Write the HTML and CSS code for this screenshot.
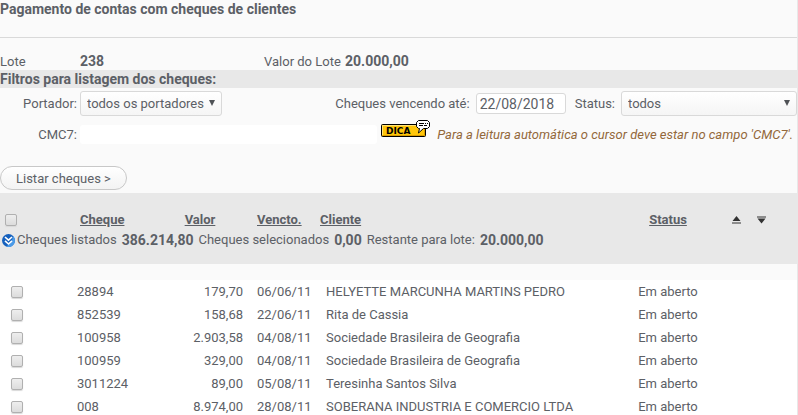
FILE: index.html
```html
<!DOCTYPE html>
<html lang="pt-br">
<head>
    <meta charset="UTF-8">
    <meta name="viewport" content="width=device-width, initial-scale=1.0">
    <title>Pagamento de contas com cheques de clientes</title>
    <link rel="stylesheet" href="styles.css">
</head>
<body>
    <div class="pagina">
        <h1 class="titulo">Pagamento de contas com cheques de clientes</h1>

        <div class="lote">
            <span class="lote-rotulo">Lote</span>
            <strong class="lote-numero">238</strong>
            <span class="lote-valor">Valor do Lote</span>
            <strong>20.000,00</strong>
        </div>

        <h2 class="subtitulo">Filtros para listagem dos cheques:</h2>

        <form class="filtros">
            <div class="linha">
                <label class="rotulo" for="portador">Portador:</label>
                <span class="selecao selecao-portador">
                    <select id="portador"><option>todos os portadores</option></select>
                </span>
                <label class="rotulo-data" for="vencendo">Cheques vencendo até:</label>
                <input class="data" type="text" id="vencendo" value="22/08/2018">
                <label class="rotulo-status" for="status">Status:</label>
                <span class="selecao selecao-status">
                    <select id="status"><option>todos</option></select>
                </span>
            </div>
            <div class="linha">
                <label class="rotulo" for="cmc7">CMC7:</label>
                <input class="cmc7" type="text" id="cmc7">
                <svg class="selo-dica" width="49" height="19" viewBox="0 0 49 19" role="img" aria-label="Dica">
                    <rect x="0.5" y="4.5" width="44" height="12" rx="1" fill="#ffc60a" stroke="#000"/>
                    <path d="M1.5 15.5V5.5H44" fill="none" stroke="#ffe27a"/>
                    <path d="M1 15.5H43.500V8" fill="none" stroke="#d99c00"/>
                    <text class="selo-texto" x="5" y="14">DICA</text>
                    <path d="M37.500 .5H46.500L48.500 2.500V6.500L46.500 8.500H42.500L37.500 13L38.500 8.500H37.500L35.500 6.500V2.500Z" fill="#fff" stroke="#000"/>
                    <path d="M38 3.500h5m1 0h1m1 0h1M38 5.500h4m1 0h3" stroke="#000" fill="none"/>
                </svg>
                <em class="dica">Para a leitura automática o cursor deve estar no campo 'CMC7'.</em>
            </div>
            <button class="botao" type="button">Listar cheques &gt;</button>
        </form>

        <table class="cheques">
            <colgroup>
                <col class="col-marca">
                <col class="col-cheque">
                <col class="col-valor">
                <col class="col-vencto">
                <col class="col-cliente">
                <col class="col-status">
                <col class="col-ordem">
            </colgroup>
            <thead>
                <tr class="cabecalho">
                    <th class="marca"><input type="checkbox" aria-label="Marcar todos"></th>
                    <th class="cheque"><a href="#">Cheque</a></th>
                    <th class="centro"><a href="#">Valor</a></th>
                    <th class="vencto"><a href="#">Vencto.</a></th>
                    <th><a href="#">Cliente</a></th>
                    <th class="centro"><a href="#">Status</a></th>
                    <th>
                        <div class="ordem">
                            <a href="#" aria-label="Subir"><svg width="9" height="8" viewBox="0 0 9 8"><path d="M4.500 0L8.500 5H.5Z M0 6.500H9V7.500H0Z" fill="#333"/></svg></a>
                            <a href="#" aria-label="Descer"><svg width="9" height="8" viewBox="0 0 9 8"><path d="M0 .5H9V1.500H0Z M.5 2.500H8.500L4.500 7.500Z" fill="#333"/></svg></a>
                        </div>
                    </th>
                </tr>
                <tr class="resumo">
                    <td colspan="7">
                        <div class="totais">
                            <svg width="13" height="13" viewBox="0 0 13 13">
                                <circle cx="6.500" cy="6.500" r="6.500" fill="#1560bd"/>
                                <path d="M13 6.500A6.500 6.500 0 0 1 4 12.500Q10 10 11 2A6.500 6.500 0 0 1 13 6.500Z" fill="#4b9be8"/>
                                <path d="M3 3L6.500 6.200L10 3M3 6.800L6.500 10L10 6.800" fill="none" stroke="#fff" stroke-width="1.600"/>
                            </svg>
                            <span>Cheques listados</span>
                            <strong>386.214,80</strong>
                            <span>Cheques selecionados</span>
                            <strong>0,00</strong>
                            <span>Restante para lote:</span>
                            <strong>20.000,00</strong>
                        </div>
                    </td>
                </tr>
            </thead>
            <tbody>
                <tr class="espaco"><td colspan="7"></td></tr>
                <tr>
                    <td class="marca"><input type="checkbox" aria-label="Cheque 28894"></td>
                    <td>28894</td>
                    <td class="direita">179,70</td>
                    <td class="vencto">06/06/11</td>
                    <td class="cliente">HELYETTE MARCUNHA MARTINS PEDRO</td>
                    <td class="centro">Em aberto</td>
                    <td></td>
                </tr>
                <tr>
                    <td class="marca"><input type="checkbox" aria-label="Cheque 852539"></td>
                    <td>852539</td>
                    <td class="direita">158,68</td>
                    <td class="vencto">22/06/11</td>
                    <td class="cliente">Rita de Cassia</td>
                    <td class="centro">Em aberto</td>
                    <td></td>
                </tr>
                <tr>
                    <td class="marca"><input type="checkbox" aria-label="Cheque 100958"></td>
                    <td>100958</td>
                    <td class="direita">2.903,58</td>
                    <td class="vencto">04/08/11</td>
                    <td class="cliente">Sociedade Brasileira de Geografia</td>
                    <td class="centro">Em aberto</td>
                    <td></td>
                </tr>
                <tr>
                    <td class="marca"><input type="checkbox" aria-label="Cheque 100959"></td>
                    <td>100959</td>
                    <td class="direita">329,00</td>
                    <td class="vencto">04/08/11</td>
                    <td class="cliente">Sociedade Brasileira de Geografia</td>
                    <td class="centro">Em aberto</td>
                    <td></td>
                </tr>
                <tr>
                    <td class="marca"><input type="checkbox" aria-label="Cheque 3011224"></td>
                    <td>3011224</td>
                    <td class="direita">89,00</td>
                    <td class="vencto">05/08/11</td>
                    <td class="cliente">Teresinha Santos Silva</td>
                    <td class="centro">Em aberto</td>
                    <td></td>
                </tr>
                <tr>
                    <td class="marca"><input type="checkbox" aria-label="Cheque 008"></td>
                    <td>008</td>
                    <td class="direita">8.974,00</td>
                    <td class="vencto">28/08/11</td>
                    <td class="cliente">SOBERANA INDUSTRIA E COMERCIO LTDA</td>
                    <td class="centro">Em aberto</td>
                    <td></td>
                </tr>
            </tbody>
        </table>
    </div>
</body>
</html>
```

FILE: styles.css
```css
* {
    box-sizing: border-box;
}

body {
    margin: 0;
    background-color: #fafafa;
    color: #5c6066;
    font-family: Roboto, "Noto Sans", sans-serif;
    font-size: 13px;
    line-height: 18px;
}

strong {
    font-size: 14px;
}

.pagina {
    border-right: 1px solid #e8e8e8;
}

.titulo {
    margin: 0;
    padding-bottom: 19px;
    border-bottom: 1px solid #d9d9d9;
    font-size: 14px;
    font-weight: bold;
}

.lote {
    display: flex;
    padding-top: 15px;
    line-height: 17px;
}

.lote-rotulo {
    width: 80px;
}

.lote-numero {
    width: 184px;
}

.lote-valor {
    width: 81px;
}

.subtitulo {
    margin: 0;
    background-color: #e8e8e8;
    font-size: 14px;
    font-weight: bold;
}

.filtros {
    padding: 3px 0;
}

.linha {
    display: flex;
    align-items: center;
    height: 25px;
    margin-bottom: 6px;
}

.rotulo {
    width: 80px;
    padding-right: 3px;
    text-align: right;
}

.rotulo-data {
    margin-left: auto;
    padding-right: 6px;
}

.rotulo-status {
    padding: 0 6px 0 9px;
}

input,
select,
button {
    color: #5c6066;
    font-family: inherit;
    font-size: 13px;
}

.selecao {
    position: relative;
    height: 25px;
}

.selecao-portador {
    width: 142px;
}

.selecao-status {
    width: 176px;
}

.selecao select {
    width: 100%;
    height: 25px;
    padding: 0 6px;
    border: 1px solid #d9d9d9;
    border-radius: 3px;
    background: linear-gradient(#ffffff, #f5f5f5);
    appearance: none;
}

.selecao::after {
    content: "";
    position: absolute;
    top: 9px;
    right: 7px;
    width: 6px;
    height: 6px;
    background-color: #4f5256;
    clip-path: polygon(0 0, 100% 0, 50% 100%);
    pointer-events: none;
}

.data {
    width: 90px;
    height: 21px;
    padding: 0 3px;
    border: 1px solid #d9d9d9;
    border-radius: 3px;
    background-color: #fff;
    font-size: 14px;
}

.cmc7 {
    flex: 1;
    min-width: 0;
    height: 19px;
    border: 0;
    border-radius: 3px;
    background-color: #fff;
}

.selo-dica {
    margin: 0 7px 10px 4px;
}

.selo-texto {
    fill: #000;
    font-family: "DejaVu Sans", sans-serif;
    font-size: 9px;
    font-weight: bold;
}

.dica {
    padding-right: 4px;
    color: #93683a;
}

.botao {
    display: block;
    height: 24px;
    margin-top: 19px;
    padding: 0 15px;
    border: 1px solid #c8c8c8;
    border-radius: 12px;
    background: linear-gradient(#ffffff, #f3f3f3);
    cursor: pointer;
}

.cheques {
    width: 100%;
    table-layout: fixed;
    border-collapse: collapse;
    background-color: #fff;
}

.cheques th,
.cheques td {
    height: 23px;
    padding: 0;
    text-align: left;
    white-space: nowrap;
}

.cheques th a {
    color: #5c6066;
}

.col-marca {
    width: 77px;
}

.col-cheque {
    width: 80px;
}

.col-valor {
    width: 86px;
}

.col-vencto {
    width: 77px;
}

.col-status {
    width: 110px;
}

.col-ordem {
    width: 74px;
}

.cabecalho,
.resumo {
    background-color: #e8e8e8;
}

.cheques .cabecalho th {
    height: 37px;
    padding-top: 17px;
}

.cheques .resumo td {
    height: 34px;
    vertical-align: top;
}

.cheques .espaco td {
    height: 16px;
    background-color: #fafafa;
}

.cheques td.marca {
    padding-left: 11px;
}

.cheques th.marca {
    padding-left: 5px;
}

.cheques th.cheque {
    padding-left: 3px;
}

.cheques .vencto {
    padding-left: 14px;
}

.cheques .cliente {
    padding-left: 6px;
}

.cheques .centro {
    text-align: center;
}

.cheques .direita {
    text-align: right;
}

input[type="checkbox"] {
    display: block;
    width: 12px;
    height: 12px;
    margin: 0;
    border: 1px solid #b0b0b0;
    border-radius: 2px;
    background: linear-gradient(#eeeeee, #dcdcdc);
    box-shadow: 0 1px 1px #d9d9d9;
    appearance: none;
}

.ordem {
    display: flex;
    gap: 16px;
    padding-left: 9px;
}

.ordem svg {
    display: block;
}

.totais {
    display: flex;
    align-items: center;
    gap: 5px;
    padding: 1px 0 0 2px;
}

.totais svg {
    margin-right: -3px;
}
```
